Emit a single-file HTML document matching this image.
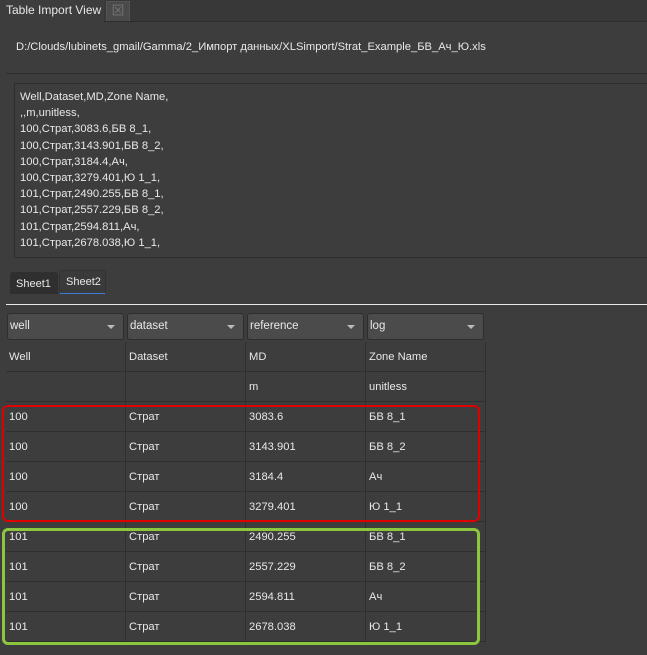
<!DOCTYPE html>
<html><head><meta charset="utf-8"><style>
*{margin:0;padding:0;box-sizing:border-box}
body{width:647px;height:655px;background:#3d3d3d;font-family:"Liberation Sans","Noto Sans CJK SC",sans-serif;font-size:11px;color:#e8e8e8;position:relative;overflow:hidden}
.a{position:absolute}
.tabbar{left:0;top:0;width:647px;height:22px;background:#383838;border-bottom:1px solid #2c2c2c}
.tab{left:0;top:0;width:104px;height:22px;background:#3d3d3d;padding:3px 0 0 6px;font-size:12px}
.close{left:106px;top:1px;width:24px;height:20px;background:#4a4a4a;border:1px solid #555;border-bottom:none;color:#777;text-align:center;font-size:13px;line-height:18px}
.txt{left:14px;top:83px;width:640px;height:175px;border:1px solid #2e2e2e;background:#3d3d3d;padding:5px 0 0 5px;line-height:16.2px;font-size:11.2px}
.combo{top:313px;height:27px;background:#4b4b4b;border:1px solid #2e2e2e;border-radius:3px;padding:6px 0 0 2px;font-size:11.5px}
.combo:after{content:"";position:absolute;right:8px;top:11px;border:4px solid transparent;border-top:4px solid #bbb}
.cell{height:30px;border-right:1px solid #2f2f2f;border-bottom:1px solid #2f2f2f;padding:9px 0 0 3px;font-size:11.2px}
.sheet{top:270px;height:24px;padding:6px 0 0 6px;font-size:11px;border-radius:3px 3px 0 0}
</style></head><body>
<div class="a tabbar"></div>
<div class="a tab">Table Import View</div>
<div class="a close">⊠</div>
<div class="a" style="left:16px;top:41px;font-size:11.2px">D:/Clouds/lubinets_gmail/Gamma/2_Импорт данных/XLSimport/Strat_Example_БВ_Ач_Ю.xls</div>
<div class="a" style="left:6px;top:73px;width:641px;height:1px;background:#2c2c2c"></div>
<div class="a txt">Well,Dataset,MD,Zone Name,<br>,,m,unitless,<br>100,Страт,3083.6,БВ 8_1,<br>100,Страт,3143.901,БВ 8_2,<br>100,Страт,3184.4,Ач,<br>100,Страт,3279.401,Ю 1_1,<br>101,Страт,2490.255,БВ 8_1,<br>101,Страт,2557.229,БВ 8_2,<br>101,Страт,2594.811,Ач,<br>101,Страт,2678.038,Ю 1_1,</div>
<div class="a sheet" style="left:10px;width:48px;background:#2f2f2f;top:272px;height:22px">Sheet1</div>
<div class="a sheet" style="left:59px;width:47px;background:#3a3a3a;border:1px solid #333;border-bottom:1px solid #3a7bd5;padding-top:5px">Sheet2</div>
<div class="a" style="left:6px;top:304px;width:641px;height:1px;background:#e8e8e8"></div>
<div class="a combo" style="left:7px;width:117px">well</div>
<div class="a combo" style="left:127px;width:117px">dataset</div>
<div class="a combo" style="left:247px;width:117px">reference</div>
<div class="a combo" style="left:367px;width:117px">log</div>
<div class="a" style="left:6px;top:342px;width:480px;display:grid;grid-template-columns:120px 120px 120px 120px">
<div class="cell">Well</div><div class="cell">Dataset</div><div class="cell">MD</div><div class="cell">Zone Name</div>
<div class="cell"></div><div class="cell"></div><div class="cell">m</div><div class="cell">unitless</div>
<div class="cell">100</div><div class="cell">Страт</div><div class="cell">3083.6</div><div class="cell">БВ 8_1</div>
<div class="cell">100</div><div class="cell">Страт</div><div class="cell">3143.901</div><div class="cell">БВ 8_2</div>
<div class="cell">100</div><div class="cell">Страт</div><div class="cell">3184.4</div><div class="cell">Ач</div>
<div class="cell">100</div><div class="cell">Страт</div><div class="cell">3279.401</div><div class="cell">Ю 1_1</div>
<div class="cell">101</div><div class="cell">Страт</div><div class="cell">2490.255</div><div class="cell">БВ 8_1</div>
<div class="cell">101</div><div class="cell">Страт</div><div class="cell">2557.229</div><div class="cell">БВ 8_2</div>
<div class="cell">101</div><div class="cell">Страт</div><div class="cell">2594.811</div><div class="cell">Ач</div>
<div class="cell">101</div><div class="cell">Страт</div><div class="cell">2678.038</div><div class="cell">Ю 1_1</div>
</div>
<div class="a" style="left:2px;top:405px;width:478px;height:117px;border:2px solid #e00000;border-radius:6px"></div>
<div class="a" style="left:2px;top:528px;width:478px;height:117px;border:3px solid #8cc63f;border-radius:6px"></div>
</body></html>
